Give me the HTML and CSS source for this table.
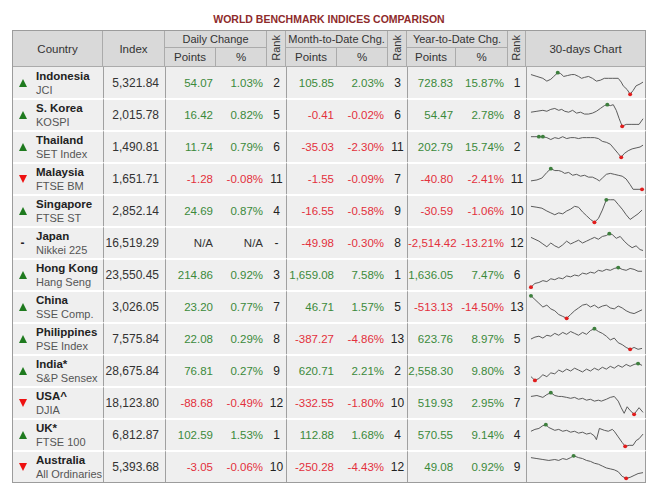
FILE: index.html
```html
<!DOCTYPE html>
<html>
<head>
<meta charset="utf-8">
<link rel="stylesheet" href="styles.css">
</head>
<body>
<div class="wrap">
<div class="title">WORLD BENCHMARK INDICES COMPARISON</div>
<table class="tbl">
<colgroup>
<col style="width:90px"><col style="width:62px"><col style="width:51px"><col style="width:51px"><col style="width:19px"><col style="width:51px"><col style="width:51px"><col style="width:19px"><col style="width:49px"><col style="width:52px"><col style="width:18px"><col style="width:120px">
</colgroup>
<thead>
<tr class="h1">
<th rowspan="2">Country</th>
<th rowspan="2">Index</th>
<th colspan="2">Daily Change</th>
<th rowspan="2" class="rk"><span>Rank</span></th>
<th colspan="2">Month-to-Date Chg.</th>
<th rowspan="2" class="rk"><span>Rank</span></th>
<th colspan="2">Year-to-Date Chg.</th>
<th rowspan="2" class="rk"><span>Rank</span></th>
<th rowspan="2" class="last">30-days Chart</th>
</tr>
<tr class="h2">
<th>Points</th><th>%</th>
<th>Points</th><th>%</th>
<th>Points</th><th>%</th>
</tr>
</thead>
<tbody>
<tr>
<td class="cty"><div class="cw"><i class="up"></i><div><b>Indonesia</b><span>JCI</span></div></div></td>
<td class="idx g">5,321.84</td>
<td class="pts g pos">54.07</td><td class="pct pos">1.03%</td><td class="rnk">2</td>
<td class="pts g pos">105.85</td><td class="pct pos">2.03%</td><td class="rnk">3</td>
<td class="pts g pos">728.83</td><td class="pct pos">15.87%</td><td class="rnk">1</td>
<td class="chart g"><svg viewBox="0 0 120 32" preserveAspectRatio="none"><polyline points="4,7 10,9 16,11 20,14 24,12 27,9 31,5 34,6 37,9 41,8 45,7 48,7 52,9 55,11 58,10 62,9 66,11 70,14 74,13 78,11 82,11 86,11 92,11 95,15 97,19 101,23 104,28 107,24 110,19 114,17 117,15"/><circle class="hi" cx="31" cy="5" r="2"/><circle class="lo" cx="104" cy="28" r="2"/></svg></td>
</tr>
<tr>
<td class="cty"><div class="cw"><i class="up"></i><div><b>S. Korea</b><span>KOSPI</span></div></div></td>
<td class="idx g">2,015.78</td>
<td class="pts g pos">16.42</td><td class="pct pos">0.82%</td><td class="rnk">5</td>
<td class="pts g neg">-0.41</td><td class="pct neg">-0.02%</td><td class="rnk">6</td>
<td class="pts g pos">54.47</td><td class="pct pos">2.78%</td><td class="rnk">8</td>
<td class="chart g"><svg viewBox="0 0 120 32" preserveAspectRatio="none"><polyline points="4,13 10,12 16,11 20,12 24,10 28,9 32,11 35,10 38,12 42,13 46,11 50,14 54,13 58,15 62,15 66,14 70,12 74,9 78,6 81,5 84,6 87,5 90,11 93,20 96,28 100,26 105,26 110,26 113,26 117,20"/><circle class="hi" cx="81" cy="5" r="2"/><circle class="lo" cx="96" cy="28" r="2"/></svg></td>
</tr>
<tr>
<td class="cty"><div class="cw"><i class="up"></i><div><b>Thailand</b><span>SET Index</span></div></div></td>
<td class="idx g">1,490.81</td>
<td class="pts g pos">11.74</td><td class="pct pos">0.79%</td><td class="rnk">6</td>
<td class="pts g neg">-35.03</td><td class="pct neg">-2.30%</td><td class="rnk">11</td>
<td class="pts g pos">202.79</td><td class="pct pos">15.74%</td><td class="rnk">2</td>
<td class="chart g"><svg viewBox="0 0 120 32" preserveAspectRatio="none"><polyline points="4,5 8,5 12,5 16,5 20,6 24,8 28,6 32,7 36,5 40,7 44,6 48,6 52,7 56,6 60,6 64,6 68,6 72,7 76,10 80,11 84,13 88,18 92,23 95,27 98,23 102,20 106,18 110,17 114,16 117,14"/><circle class="hi" cx="12" cy="5" r="2"/><circle class="hi" cx="16" cy="5" r="2"/><circle class="lo" cx="95" cy="27" r="2"/></svg></td>
</tr>
<tr>
<td class="cty"><div class="cw"><i class="dn"></i><div><b>Malaysia</b><span>FTSE BM</span></div></div></td>
<td class="idx g">1,651.71</td>
<td class="pts g neg">-1.28</td><td class="pct neg">-0.08%</td><td class="rnk">11</td>
<td class="pts g neg">-1.55</td><td class="pct neg">-0.09%</td><td class="rnk">7</td>
<td class="pts g neg">-40.80</td><td class="pct neg">-2.41%</td><td class="rnk">11</td>
<td class="chart g"><svg viewBox="0 0 120 32" preserveAspectRatio="none"><polyline points="4,18 10,17 15,15 20,9 24,5 28,7 32,7 35,8 38,10 42,9 46,12 50,11 54,13 58,12 62,14 66,14 70,16 73,18 76,15 80,11 84,10 88,11 92,12 96,13 100,16 104,22 107,27 112,27 116,27"/><circle class="hi" cx="24" cy="5" r="2"/><circle class="lo" cx="116" cy="27" r="2"/></svg></td>
</tr>
<tr>
<td class="cty"><div class="cw"><i class="up"></i><div><b>Singapore</b><span>FTSE ST</span></div></div></td>
<td class="idx g">2,852.14</td>
<td class="pts g pos">24.69</td><td class="pct pos">0.87%</td><td class="rnk">4</td>
<td class="pts g neg">-16.55</td><td class="pct neg">-0.58%</td><td class="rnk">9</td>
<td class="pts g neg">-30.59</td><td class="pct neg">-1.06%</td><td class="rnk">10</td>
<td class="chart g"><svg viewBox="0 0 120 32" preserveAspectRatio="none"><polyline points="4,11 10,12 15,13 20,16 24,18 28,20 32,18 36,19 40,16 44,14 48,11 52,12 56,17 60,21 64,25 68,28 72,24 76,15 80,4 84,4 88,4 92,9 96,14 100,20 104,25 108,22 112,19 116,15"/><circle class="hi" cx="80" cy="4" r="2"/><circle class="lo" cx="68" cy="28" r="2"/></svg></td>
</tr>
<tr>
<td class="cty"><div class="cw"><i class="na">-</i><div><b>Japan</b><span>Nikkei 225</span></div></div></td>
<td class="idx g">16,519.29</td>
<td class="pts g">N/A</td><td class="pct">N/A</td><td class="rnk">-</td>
<td class="pts g neg">-49.98</td><td class="pct neg">-0.30%</td><td class="rnk">8</td>
<td class="pts g neg">-2,514.42</td><td class="pct neg">-13.21%</td><td class="rnk">12</td>
<td class="chart g"><svg viewBox="0 0 120 32" preserveAspectRatio="none"><polyline points="4,10 8,12 12,14 16,17 20,20 24,16 28,19 32,21 36,18 40,14 44,17 48,15 52,13 56,16 60,14 64,12 68,10 72,12 76,9 80,8 83,6 86,7 90,11 94,9 98,14 102,18 106,21 110,19 114,23 117,24"/><circle class="hi" cx="83" cy="6" r="2"/></svg></td>
</tr>
<tr>
<td class="cty"><div class="cw"><i class="up"></i><div><b>Hong Kong</b><span>Hang Seng</span></div></div></td>
<td class="idx g">23,550.45</td>
<td class="pts g pos">214.86</td><td class="pct pos">0.92%</td><td class="rnk">3</td>
<td class="pts g pos">1,659.08</td><td class="pct pos">7.58%</td><td class="rnk">1</td>
<td class="pts g pos">1,636.05</td><td class="pct pos">7.47%</td><td class="rnk">6</td>
<td class="chart g"><svg viewBox="0 0 120 32" preserveAspectRatio="none"><polyline points="4,29 8,25 12,24 16,22 20,23 24,20 28,21 32,19 36,20 40,17 44,18 48,16 52,17 56,14 60,15 64,13 68,14 72,11 76,12 80,10 84,11 88,9 92,8 96,10 100,11 104,9 108,10 112,12 116,12"/><circle class="hi" cx="92" cy="8" r="2"/><circle class="lo" cx="4" cy="29" r="2"/></svg></td>
</tr>
<tr>
<td class="cty"><div class="cw"><i class="up"></i><div><b>China</b><span>SSE Comp.</span></div></div></td>
<td class="idx g">3,026.05</td>
<td class="pts g pos">23.20</td><td class="pct pos">0.77%</td><td class="rnk">7</td>
<td class="pts g pos">46.71</td><td class="pct pos">1.57%</td><td class="rnk">5</td>
<td class="pts g neg">-513.13</td><td class="pct neg">-14.50%</td><td class="rnk">13</td>
<td class="chart g"><svg viewBox="0 0 120 32" preserveAspectRatio="none"><polyline points="4,4 8,8 12,12 16,16 20,14 24,18 28,20 32,24 36,26 40,28 44,24 48,20 52,17 56,14 60,13 64,16 68,14 72,17 76,15 80,14 84,17 88,18 92,15 96,17 100,20 104,22 108,23 112,21 116,19"/><circle class="hi" cx="4" cy="4" r="2"/><circle class="lo" cx="40" cy="28" r="2"/></svg></td>
</tr>
<tr>
<td class="cty"><div class="cw"><i class="up"></i><div><b>Philippines</b><span>PSE Index</span></div></div></td>
<td class="idx g">7,575.84</td>
<td class="pts g pos">22.08</td><td class="pct pos">0.29%</td><td class="rnk">8</td>
<td class="pts g neg">-387.27</td><td class="pct neg">-4.86%</td><td class="rnk">13</td>
<td class="pts g pos">623.76</td><td class="pct pos">8.97%</td><td class="rnk">5</td>
<td class="chart g"><svg viewBox="0 0 120 32" preserveAspectRatio="none"><polyline points="4,16 8,14 12,13 16,15 20,12 24,13 28,10 32,12 36,9 40,11 44,8 48,10 52,12 56,9 60,11 64,7 68,5 72,8 76,10 80,13 84,17 88,15 92,20 96,22 100,25 104,27 108,25 112,27 116,26"/><circle class="hi" cx="68" cy="5" r="2"/><circle class="lo" cx="104" cy="27" r="2"/></svg></td>
</tr>
<tr>
<td class="cty"><div class="cw"><i class="up"></i><div><b>India*</b><span>S&amp;P Sensex</span></div></div></td>
<td class="idx g">28,675.84</td>
<td class="pts g pos">76.81</td><td class="pct pos">0.27%</td><td class="rnk">9</td>
<td class="pts g pos">620.71</td><td class="pct pos">2.21%</td><td class="rnk">2</td>
<td class="pts g pos">2,558.30</td><td class="pct pos">9.80%</td><td class="rnk">3</td>
<td class="chart g"><svg viewBox="0 0 120 32" preserveAspectRatio="none"><polyline points="4,22 8,26 12,24 16,20 20,22 24,18 28,19 32,15 36,17 40,14 44,16 48,13 52,15 56,17 60,14 64,16 68,13 72,15 76,12 80,14 84,11 88,13 92,10 96,12 100,9 104,11 108,9 112,8 116,10"/><circle class="hi" cx="112" cy="8" r="2"/><circle class="lo" cx="8" cy="26" r="2"/></svg></td>
</tr>
<tr>
<td class="cty"><div class="cw"><i class="dn"></i><div><b>USA^</b><span>DJIA</span></div></div></td>
<td class="idx g">18,123.80</td>
<td class="pts g neg">-88.68</td><td class="pct neg">-0.49%</td><td class="rnk">12</td>
<td class="pts g neg">-332.55</td><td class="pct neg">-1.80%</td><td class="rnk">10</td>
<td class="pts g pos">519.93</td><td class="pct pos">2.95%</td><td class="rnk">7</td>
<td class="chart g"><svg viewBox="0 0 120 32" preserveAspectRatio="none"><polyline points="4,9 10,8 16,10 20,7 24,5 28,8 32,9 35,9 40,10 44,11 48,10 52,12 56,11 60,13 64,12 68,14 72,13 75,14 80,12 84,10 88,9 92,14 95,21 98,27 101,20 104,24 108,28 113,21 117,26"/><circle class="hi" cx="24" cy="5" r="2"/><circle class="lo" cx="108" cy="28" r="2"/></svg></td>
</tr>
<tr>
<td class="cty"><div class="cw"><i class="up"></i><div><b>UK*</b><span>FTSE 100</span></div></div></td>
<td class="idx g">6,812.87</td>
<td class="pts g pos">102.59</td><td class="pct pos">1.53%</td><td class="rnk">1</td>
<td class="pts g pos">112.88</td><td class="pct pos">1.68%</td><td class="rnk">4</td>
<td class="pts g pos">570.55</td><td class="pct pos">9.14%</td><td class="rnk">4</td>
<td class="chart g"><svg viewBox="0 0 120 32" preserveAspectRatio="none"><polyline points="4,12 8,10 12,9 16,6 19,5 22,8 28,11 32,10 36,12 40,11 44,13 48,12 52,14 56,13 60,15 64,14 68,17 70,21 73,9 78,11 82,12 86,10 88,12 92,18 96,24 99,28 103,27 107,27 110,22 113,20 117,15"/><circle class="hi" cx="19" cy="5" r="2"/><circle class="lo" cx="99" cy="28" r="2"/></svg></td>
</tr>
<tr>
<td class="cty"><div class="cw"><i class="dn"></i><div><b>Australia</b><span>All Ordinaries</span></div></div></td>
<td class="idx g">5,393.68</td>
<td class="pts g neg">-3.05</td><td class="pct neg">-0.06%</td><td class="rnk">10</td>
<td class="pts g neg">-250.28</td><td class="pct neg">-4.43%</td><td class="rnk">12</td>
<td class="pts g pos">49.08</td><td class="pct pos">0.92%</td><td class="rnk">9</td>
<td class="chart g"><svg viewBox="0 0 120 32" preserveAspectRatio="none"><polyline points="4,6 10,7 16,8 22,9 28,8 32,9 36,7 40,8 44,6 47,4 52,6 56,7 60,9 64,10 68,12 72,13 76,15 80,17 84,18 88,19 92,21 96,26 100,28 104,27 108,25 112,23 117,22"/><circle class="hi" cx="47" cy="4" r="2"/><circle class="lo" cx="100" cy="28" r="2"/></svg></td>
</tr>
</tbody>
</table>
</div>
</body>
</html>
```
FILE: styles.css
```css
html, body {
  margin: 0;
  padding: 0;
  background: #ffffff;
}
body {
  font-family: "Liberation Sans", Arial, sans-serif;
  color: #222;
}
.wrap {
  padding: 13px 0 0 12px;
  width: 634px;
}
.title {
  text-align: center;
  color: #8e2b2b;
  font-weight: bold;
  font-size: 10.5px;
  line-height: 13px;
  height: 17px;
}
.tbl {
  border-collapse: separate;
  border-spacing: 0;
  table-layout: fixed;
  width: 634px;
  border: 1px solid #9c9c9c;
  border-right: none;
}
.tbl th {
  background: #d9d9d9;
  color: #333;
  font-weight: normal;
  font-size: 11px;
  padding: 0;
  border-right: 1px solid #ababab;
  border-bottom: 1px solid #ababab;
  text-align: center;
  white-space: nowrap;
  overflow: hidden;
}
.tbl th.last {
  border-right: 1px solid #9c9c9c;
}
.h1 th {
  height: 16px;
}
.h2 th {
  height: 18px;
  font-size: 11.5px;
}
.h1 th[rowspan] {
  font-size: 11.5px;
}
.tbl th.rk {
  font-size: 11px;
  vertical-align: middle;
}
.rk span {
  display: inline-block;
  writing-mode: vertical-rl;
  transform: rotate(180deg);
  line-height: 17px;
}
.tbl td {
  background: #efefef;
  height: 30px;
  padding: 0;
  border-top: 2px solid #ffffff;
  font-size: 11.5px;
  white-space: nowrap;
  vertical-align: middle;
}
.tbl tbody tr:first-child td {
  border-top: none;
  height: 31px;
}
.tbl td.g {
  border-left: 1px solid #a0a0a0;
}
.tbl td.chart {
  border-right: 1px solid #9c9c9c;
  padding: 0;
}
.cw {
  display: flex;
  align-items: center;
}
.cw i {
  display: block;
  width: 0;
  height: 0;
  margin: 0 9px 0 6px;
  flex: none;
}
.cw i.up {
  border-left: 4.5px solid transparent;
  border-right: 4.5px solid transparent;
  border-bottom: 8px solid #1e7a1e;
}
.cw i.dn {
  border-left: 4.5px solid transparent;
  border-right: 4.5px solid transparent;
  border-top: 8px solid #ee1111;
}
.cw i.na {
  font-style: normal;
  font-weight: bold;
  font-size: 12px;
  width: 9px;
  height: auto;
  margin-left: 5px;
  text-align: center;
  color: #222;
}
.cw div {
  display: flex;
  flex-direction: column;
  line-height: 14px;
}
.cw b {
  font-size: 11.5px;
  color: #222;
}
.cw span {
  font-size: 11px;
  color: #555;
}
.idx {
  text-align: right;
  padding-right: 6px !important;
  color: #333;
  font-size: 12px !important;
}
.pts {
  text-align: right;
  padding-right: 3px !important;
  color: #333;
}
.pct {
  text-align: right;
  padding-right: 4px !important;
  color: #333;
}
.rnk {
  text-align: center;
  color: #222;
  font-size: 12px !important;
}
.pos {
  color: #3b8a3b;
}
.neg {
  color: #e3303c;
}
.chart svg {
  display: block;
  width: 119px;
  height: 30px;
}
.chart polyline {
  fill: none;
  stroke: #555;
  stroke-width: 1;
}
.chart .hi {
  fill: #3d7f3d;
}
.chart .lo {
  fill: #e11d1d;
}
```
